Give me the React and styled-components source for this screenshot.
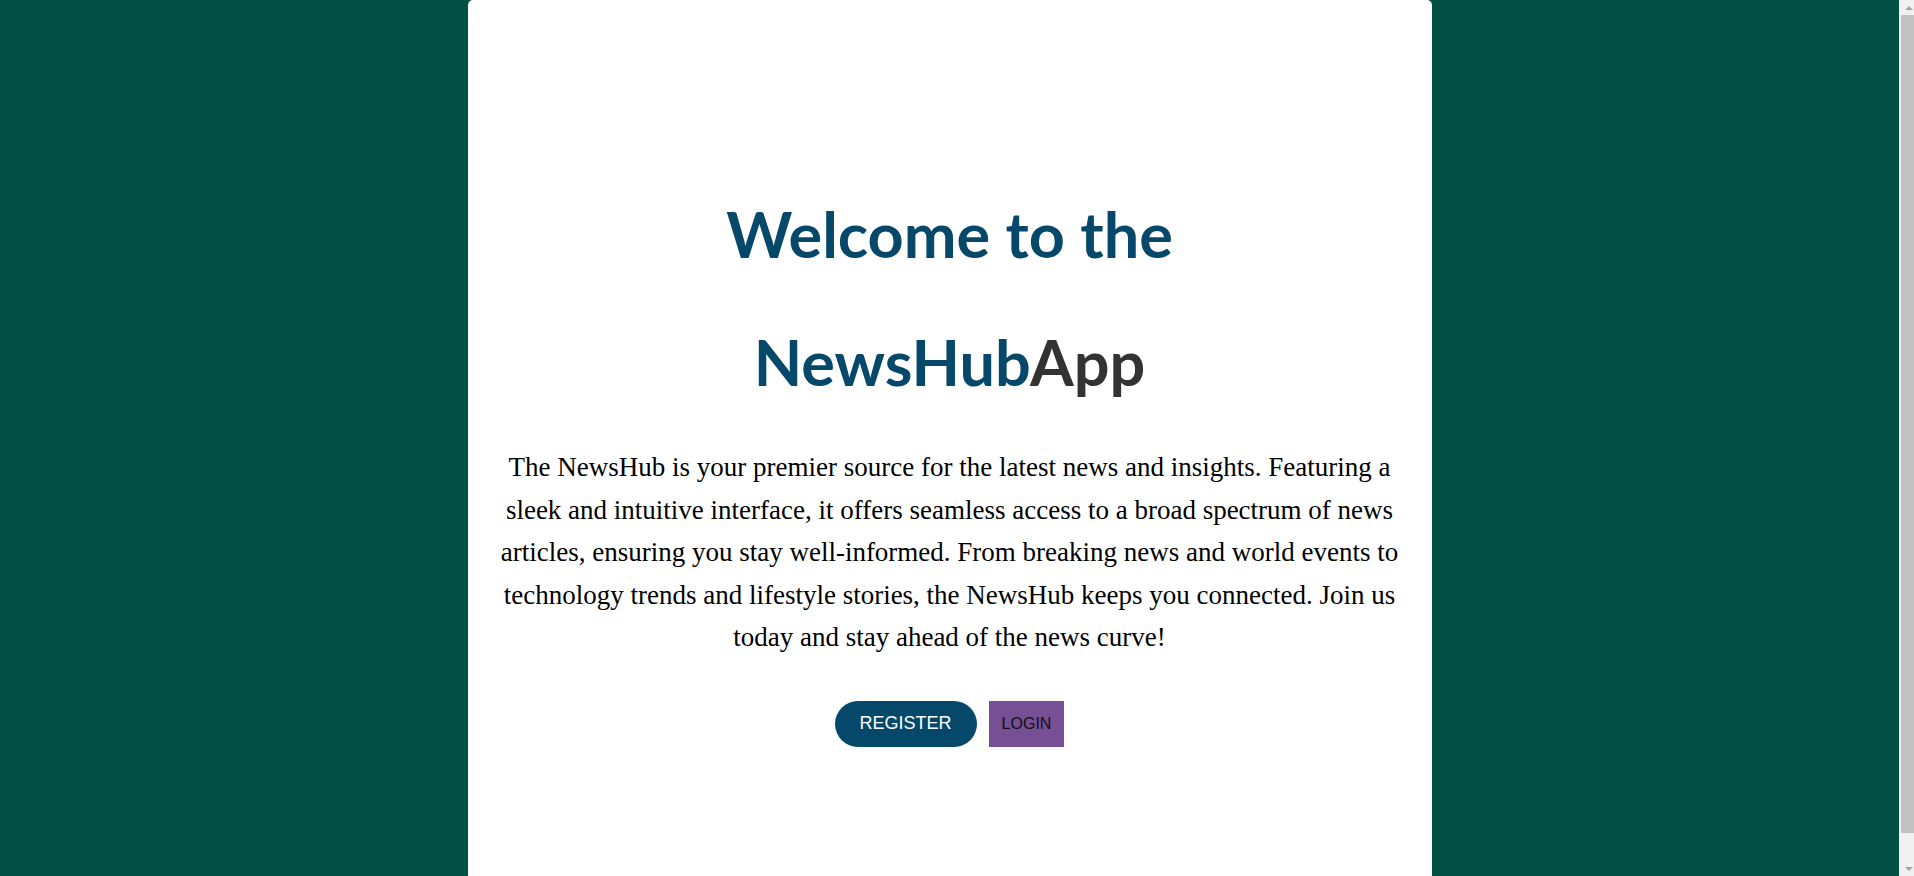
import React from "react";
import styled, { createGlobalStyle } from "styled-components";

const Global = createGlobalStyle`
  html, body {
    margin: 0;
    padding: 0;
  }
  body {
    background: #024f43;
    font-family: "Liberation Serif", "Times New Roman", serif;
  }
`;

const Page = styled.main`
  display: flex;
  justify-content: center;
  min-height: 100vh;
  padding-right: 15px;
  box-sizing: border-box;
`;

const Card = styled.section`
  width: 964px;
  box-sizing: border-box;
  background: #ffffff;
  border-radius: 5px 5px 0 0;
  padding: 170px 32px 80px;
  display: flex;
  flex-direction: column;
  align-items: center;
  text-align: center;
`;

const Title = styled.h1`
  margin: 0 0 20px;
  font-family: Lato, "Open Sans", sans-serif;
  font-weight: 700;
  font-size: 63px;
  line-height: 128px;
  color: #05486a;
`;

const TitleLine = styled.span`
  display: block;
`;

const Accent = styled.span`
  color: #333333;
`;

const Lead = styled.p`
  margin: 0;
  font-size: 27px;
  line-height: 42.5px;
  color: #000000;
`;

const Actions = styled.div`
  display: flex;
  gap: 12px;
  margin-top: 42px;
`;

const Button = styled.button`
  font-family: "Liberation Sans", Arial, sans-serif;
  font-size: ${(p) => (p.$primary ? "18px" : "16px")};
  height: 46px;
  border: none;
  cursor: pointer;
  padding: ${(p) => (p.$primary ? "0 25px" : "0 13px")};
  border-radius: ${(p) => (p.$primary ? "23px" : "0")};
  background: ${(p) => (p.$primary ? "#05486a" : "#764f95")};
  color: ${(p) => (p.$primary ? "#ffffff" : "#111111")};
`;

/* Window scrollbar drawn over the page edge, as in the screenshot */
const ScrollRail = styled.aside`
  position: fixed;
  top: 0;
  right: 0;
  bottom: 0;
  width: 15px;
  background: #f1f1f1;
  display: flex;
  flex-direction: column;
`;

const ArrowCell = styled.div`
  height: 15px;
  flex: 0 0 15px;
  display: flex;
  align-items: center;
  justify-content: center;
  padding-left: 4px;
`;

const Arrow = styled.span`
  width: 0;
  height: 0;
  border-left: 4px solid transparent;
  border-right: 4px solid transparent;
  ${(p) =>
    p.$down
      ? "border-top: 4px solid #a3a3a3;"
      : "border-bottom: 4px solid #a3a3a3;"}
`;

const Thumb = styled.div`
  flex: 1;
  margin: 0 0 28px 2px;
  background: #c1c1c1;
`;

export default function App() {
  return (
    <>
      <Global />
      <Page>
        <Card>
          <Title>
            <TitleLine>Welcome to the</TitleLine>
            <TitleLine>
              NewsHub<Accent>App</Accent>
            </TitleLine>
          </Title>
          <Lead>
            The NewsHub is your premier source for the latest news and insights. Featuring a sleek and
            intuitive interface, it offers seamless access to a broad spectrum of news articles, ensuring
            you stay well-informed. From breaking news and world events to technology trends and lifestyle
            stories, the NewsHub keeps you connected. Join us today and stay ahead of the news curve!
          </Lead>
          <Actions>
            <Button $primary>REGISTER</Button>
            <Button>LOGIN</Button>
          </Actions>
        </Card>
      </Page>
      <ScrollRail aria-hidden="true">
        <ArrowCell>
          <Arrow />
        </ArrowCell>
        <Thumb />
        <ArrowCell>
          <Arrow $down />
        </ArrowCell>
      </ScrollRail>
    </>
  );
}
